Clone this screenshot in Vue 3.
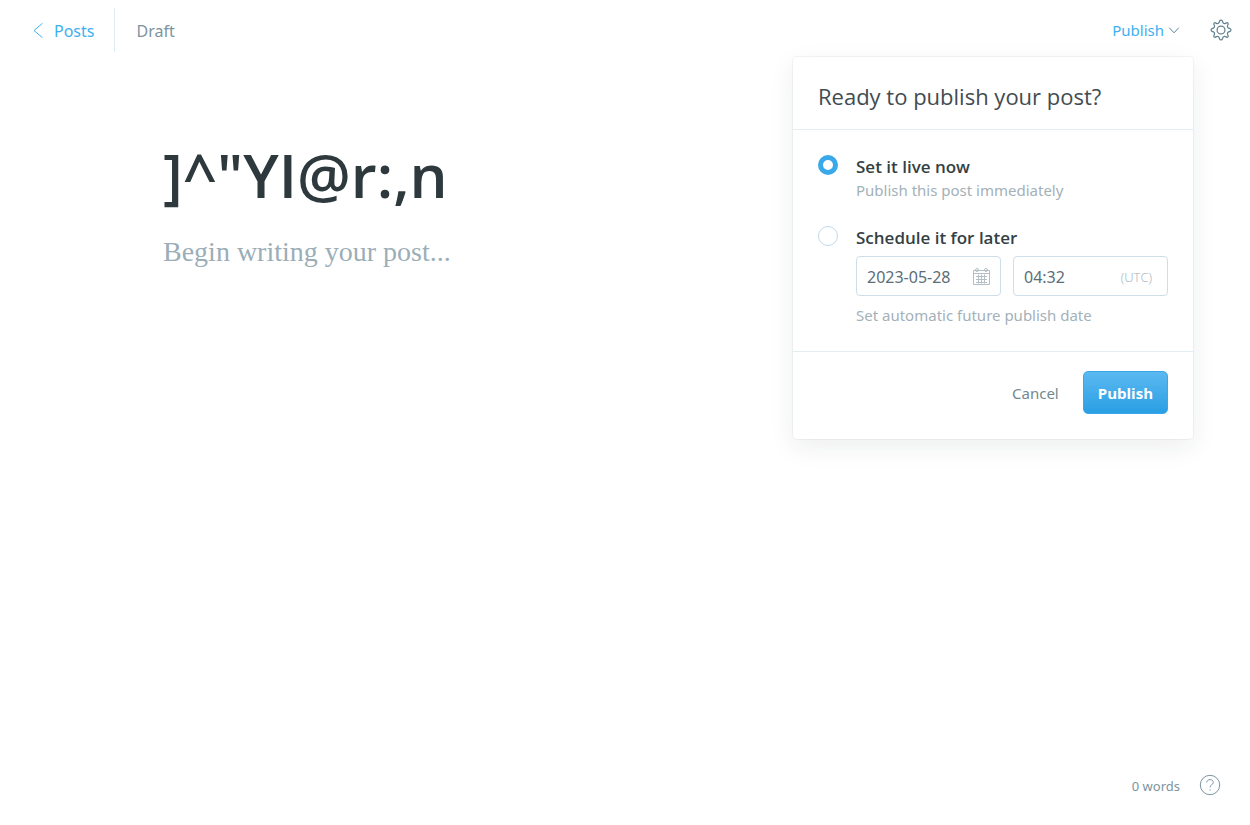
<script setup>
import { ref } from 'vue'

const title = ref(']^"YI@r:,n')
const body = ref('')
const mode = ref('now')
const date = ref('2023-05-28')
const time = ref('04:32')
</script>

<template>
  <div class="editor">
    <header class="topbar">
      <nav class="crumbs">
        <a class="back" href="#posts">
          <svg class="back-icon" viewBox="0 0 10 16" aria-hidden="true"><path d="M9.500 1.300 1 8.500l8.500 7.200" /></svg>
          <span class="crumb-text">Posts</span>
        </a>
        <span class="crumb-text status">Draft</span>
      </nav>
      <div class="actions">
        <button class="trigger" type="button" aria-expanded="true">
          <span>Publish</span>
          <svg class="chevron" viewBox="0 0 12 8" aria-hidden="true"><path d="M1.200 1.700 6 6.800l4.800-5.100" /></svg>
        </button>
        <button class="icon-button" type="button" aria-label="Settings">
          <svg class="gear" viewBox="0 0 24 24" aria-hidden="true">
            <path d="m13.500 2.200.5 1.400a2.100 2.100 0 0 0 2.900 1.200l1.300-.6a1.200 1.200 0 0 1 1.600 1.600l-.6 1.300a2.100 2.100 0 0 0 1.200 2.900l1.400.5a1.600 1.600 0 0 1 0 3l-1.400.5a2.100 2.100 0 0 0-1.200 2.900l.6 1.300a1.200 1.200 0 0 1-1.600 1.600l-1.300-.6a2.100 2.100 0 0 0-2.900 1.200l-.5 1.400a1.600 1.600 0 0 1-3 0l-.5-1.400a2.100 2.100 0 0 0-2.900-1.200l-1.300.6a1.200 1.200 0 0 1-1.600-1.600l.6-1.300A2.100 2.100 0 0 0 3.600 14l-1.400-.5a1.600 1.600 0 0 1 0-3l1.400-.5a2.100 2.100 0 0 0 1.200-2.900l-.6-1.300a1.200 1.200 0 0 1 1.600-1.600l1.300.6A2.100 2.100 0 0 0 10 3.600l.5-1.400a1.600 1.600 0 0 1 3 0Z" />
            <circle cx="12" cy="12" r="4.300" />
          </svg>
        </button>
      </div>

      <form class="menu" @submit.prevent>
        <h2 class="menu-title">Ready to publish your post?</h2>
        <div class="menu-body">
          <div class="option">
            <input id="mode-now" v-model="mode" class="radio" type="radio" name="mode" value="now" />
            <div class="option-text">
              <label class="option-label" for="mode-now">Set it live now</label>
              <p class="hint">Publish this post immediately</p>
            </div>
          </div>
          <div class="option">
            <input id="mode-later" v-model="mode" class="radio" type="radio" name="mode" value="later" />
            <div class="option-text">
              <label class="option-label" for="mode-later">Schedule it for later</label>
              <div class="fields">
                <div class="field">
                  <input v-model="date" class="field-input" type="text" aria-label="Publish date" />
                  <svg class="calendar" viewBox="0 0 17 17" aria-hidden="true">
                    <path d="M.5 2.500h16v14H.5zM.5 5.500h16M3 8.500h11M3 11.500h11M3 14.500h11M5.500 6.500v9M8.500 6.500v9M11.500 6.500v9" />
                    <circle cx="4" cy="2" r="1.500" />
                    <circle cx="13" cy="2" r="1.500" />
                  </svg>
                </div>
                <div class="field time">
                  <input v-model="time" class="field-input" type="text" aria-label="Publish time" />
                  <span class="zone">(UTC)</span>
                </div>
              </div>
              <p class="hint">Set automatic future publish date</p>
            </div>
          </div>
        </div>
        <div class="menu-footer">
          <button class="cancel" type="button">Cancel</button>
          <button class="submit" type="submit">Publish</button>
        </div>
      </form>
    </header>

    <main class="page">
      <input v-model="title" class="title" type="text" aria-label="Post title" />
      <textarea v-model="body" class="content" aria-label="Post content" placeholder="Begin writing your post..."></textarea>
    </main>

    <footer class="bottombar">
      <span class="count">0 words</span>
      <a class="help" href="#help" aria-label="Help">
        <svg class="help-icon" viewBox="0 0 22 22" aria-hidden="true">
          <circle cx="11" cy="11" r="9.700" />
          <path d="M7.800 8.500C7.800 4.600 14.300 4.700 14.300 8.400c0 2.500-3.300 2.300-3.300 5" />
          <path d="M11 15.300v1.200" />
        </svg>
      </a>
    </footer>
  </div>
</template>

<style>
body {
  margin: 0;
  background: #fff;
}
</style>

<style scoped>
.editor {
  display: flex;
  flex-direction: column;
  min-height: 100vh;
  color: #343f44;
  font-family: "Noto Sans", "Open Sans", sans-serif;
  font-size: 15px;
}

* {
  box-sizing: border-box;
}

button,
input,
textarea {
  margin: 0;
  padding: 0;
  border: 0;
  outline: 0;
  background: none;
  color: inherit;
  font: inherit;
}

button {
  cursor: pointer;
}

a {
  text-decoration: none;
}

svg {
  display: block;
  fill: none;
  stroke: currentColor;
}

.topbar {
  position: relative;
  display: flex;
  justify-content: space-between;
  align-items: center;
  height: 60px;
  padding: 0 18px 0 33px;
}

.crumbs,
.back,
.actions,
.trigger {
  display: flex;
  align-items: center;
}

.back {
  gap: 11px;
  height: 44px;
  padding-right: 20px;
  border-right: 1px solid #dfebf2;
  color: #3eb0ef;
}

.back-icon {
  width: 10px;
  height: 16px;
}

.crumb-text {
  padding-top: 2px;
  font-size: 16px;
}

.status {
  padding-left: 21px;
  color: #7d939d;
}

.actions {
  gap: 30px;
}

.trigger {
  gap: 4px;
  color: #3eb0ef;
}

.chevron {
  width: 12px;
  height: 8px;
  color: #5a8298;
}

.icon-button {
  color: #60808d;
}

.gear {
  width: 22px;
  height: 22px;
  stroke-width: 1.3;
}

.menu {
  position: absolute;
  top: 57px;
  right: 57px;
  z-index: 1;
  width: 400px;
  border-radius: 4px;
  background: #fff;
  box-shadow: 0 0 0 1px rgba(99, 114, 130, 0.07), 0 8px 26px rgba(27, 39, 51, 0.08);
}

.menu-title {
  margin: 0;
  padding: 23px 25px 17px;
  border-bottom: 1px solid #e3edf4;
  color: #414c51;
  font-family: "Open Sans", sans-serif;
  font-size: 22px;
  font-weight: 400;
  line-height: 32px;
}

.menu-body {
  display: grid;
  gap: 25px;
  padding: 25px;
}

.option {
  display: flex;
  align-items: flex-start;
  gap: 18px;
}

.option-text {
  flex: 1;
  min-width: 0;
}

.radio {
  appearance: none;
  flex: none;
  width: 20px;
  height: 20px;
  border: 1px solid #c1dbea;
  border-radius: 50%;
  background: #fff;
}

.radio:checked {
  border: 5px solid #3aa9ea;
}

.option-label {
  display: block;
  font-family: "Open Sans", sans-serif;
  font-size: 17px;
  font-weight: 600;
  line-height: 24px;
}

.hint {
  margin: 0;
  color: #a3b1b8;
  line-height: 22px;
}

.fields {
  display: grid;
  grid-template-columns: 145fr 155fr;
  gap: 12px;
  margin: 6px 0 8px;
}

.field {
  display: flex;
  align-items: center;
  min-width: 0;
  height: 40px;
  padding: 0 10px;
  border: 1px solid #cfdfe9;
  border-radius: 4px;
}

.field-input {
  flex: 1;
  width: 100%;
  min-width: 0;
  padding-top: 2px;
  color: #5b6e77;
  font-size: 16px;
}

.time {
  padding-right: 15px;
}

.calendar {
  width: 17px;
  height: 17px;
  color: #b3bfc5;
}

.zone {
  padding-top: 2px;
  color: #a3b1b8;
  font-family: "Open Sans", sans-serif;
  font-size: 13px;
  font-weight: 300;
}

.menu-footer {
  display: flex;
  justify-content: flex-end;
  align-items: center;
  gap: 24px;
  padding: 19px 25px 25px;
  border-top: 1px solid #e3edf4;
}

.cancel {
  color: #738893;
}

.submit {
  height: 43px;
  padding: 0 14px;
  border: 1px solid #3aa7e8;
  border-radius: 5px;
  background: linear-gradient(#5bb9f0, #2a9fe4);
  color: #fff;
  font-family: "Open Sans", sans-serif;
  font-weight: 700;
}

.page {
  flex: 1;
  display: flex;
  flex-direction: column;
  width: 100%;
  max-width: 924px;
  margin: 0 auto;
  padding-top: 74px;
}

.title {
  width: 100%;
  height: 82px;
  color: #2e393e;
  font-family: "Open Sans", sans-serif;
  font-size: 60px;
  font-weight: 600;
}

.content {
  flex: 1;
  width: 100%;
  padding-top: 17px;
  resize: none;
  font-family: "Liberation Serif", serif;
  font-size: 28px;
  line-height: 38px;
}

.content::placeholder {
  color: #9baeb8;
  opacity: 1;
}

.bottombar {
  display: flex;
  justify-content: flex-end;
  align-items: center;
  gap: 19px;
  padding: 12px 29px 29px;
  color: #7d939d;
  font-size: 13px;
}

.count {
  padding-top: 2px;
}

.help {
  color: #7d949f;
}

.help-icon {
  width: 22px;
  height: 22px;
}
</style>
